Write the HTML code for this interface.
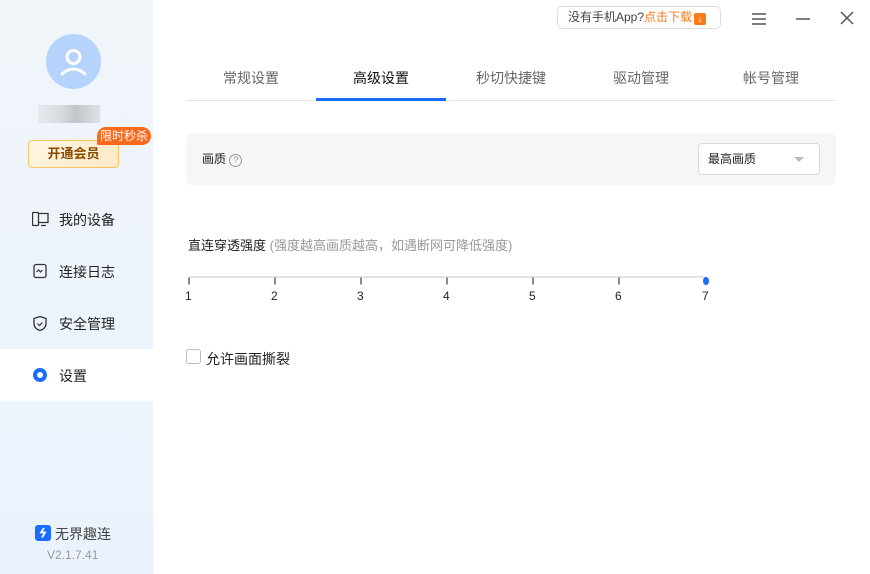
<!DOCTYPE html>
<html><head><meta charset="utf-8"><style>
*{margin:0;padding:0;box-sizing:border-box}
body{width:870px;height:574px;overflow:hidden;font-family:"Liberation Sans","Noto Sans CJK SC",sans-serif;background:#fff;position:relative;color:#222}
.side{position:absolute;left:0;top:0;width:153px;height:574px;background:linear-gradient(#f0f5f9,#eaf3fd)}
.abs{position:absolute}
.nav{position:absolute;left:0;width:153px;height:52px;font-size:14px;color:#222}
.nav span{position:absolute;left:59px;top:18px;line-height:18px}
.nav svg{position:absolute;left:32px;top:18px}
.tab{position:absolute;top:68px;width:130px;text-align:center;font-size:14px;color:#666;line-height:20px}
.n{position:absolute;top:289px;font-size:12px;color:#222}
</style></head><body>
<div class="side">
 <div class="abs" style="left:46px;top:34px;width:55px;height:55px;border-radius:50%;background:#b5d3fd">
  <svg width="55" height="55" viewBox="0 0 55 55"><circle cx="27.5" cy="23" r="6.5" fill="none" stroke="#fff" stroke-width="3"/><path d="M16 40 Q27.5 30 39 40" fill="none" stroke="#fff" stroke-width="3" stroke-linecap="round"/></svg>
 </div>
 <div class="abs" style="left:38px;top:105px;width:62px;height:18px;background:linear-gradient(90deg,#e4e8ec,#cfd3d8 40%,#b6b9bd 60%,#d9dde1);opacity:.8"></div>
 <div class="abs" style="left:28px;top:140px;width:91px;height:28px;border:1px solid #f6c461;border-radius:4px;background:linear-gradient(135deg,#fff6e4,#fde9c5);color:#8a4a00;font-size:13px;font-weight:bold;text-align:center;line-height:26px">开通会员</div>
 <div class="abs" style="left:97px;top:127px;width:54px;height:18px;background:#fa6a1d;border-radius:9px 9px 9px 2px;color:#fff;font-size:12px;text-align:center;line-height:18px">限时秒杀</div>
 <div class="nav" style="top:193px"><svg width="18" height="16" viewBox="0 0 18 16"><rect x="0.5" y="1.5" width="6" height="13" rx="1" fill="none" stroke="#333" stroke-width="1.3"/><path d="M6.5 2.5H16v9H6.5M9 14.5h5" fill="none" stroke="#333" stroke-width="1.3"/></svg><span>我的设备</span></div>
 <div class="nav" style="top:245px"><svg width="16" height="16" viewBox="0 0 16 16"><rect x="2" y="1.5" width="12" height="13" rx="2" fill="none" stroke="#333" stroke-width="1.3"/><path d="M4.5 9l2-2 2 2 2-2" fill="none" stroke="#333" stroke-width="1.2"/></svg><span>连接日志</span></div>
 <div class="nav" style="top:297px"><svg width="16" height="17" viewBox="0 0 16 17"><path d="M8 1.5L14 3.5v5c0 4-3 6-6 7-3-1-6-3-6-7v-5z" fill="none" stroke="#333" stroke-width="1.3"/><path d="M5.5 8.5l2 2 3-3" fill="none" stroke="#333" stroke-width="1.2"/></svg><span>安全管理</span></div>
 <div class="nav" style="top:349px;background:#fff"><svg width="16" height="16" viewBox="0 0 16 16"><circle cx="8" cy="8" r="5" fill="none" stroke="#1a6cff" stroke-width="4"/></svg><span>设置</span></div>
 <div class="abs" style="left:35px;top:525px;width:16px;height:16px;border-radius:3px;background:#1a6cff"><svg width="16" height="16" viewBox="0 0 16 16"><path d="M9 3L6 7.5h4L7 12.5" fill="none" stroke="#fff" stroke-width="1.8"/></svg></div>
 <div class="abs" style="left:55px;top:524px;font-size:14px;color:#444">无界趣连</div>
 <div class="abs" style="left:47px;top:548px;font-size:12px;color:#999">V2.1.7.41</div>
</div>
<div class="abs" style="left:557px;top:6px;width:164px;height:23px;border:1px solid #ddd;border-radius:5px;font-size:12px;line-height:21px;padding-left:10px;color:#444">没有手机App?<span style="color:#fa7b17">点击下载</span><span style="display:inline-block;width:12px;height:12px;background:#fa7b17;border-radius:2px;vertical-align:-1px;margin-left:2px;color:#fff;font-size:9px;line-height:12px;text-align:center">↓</span></div>
<svg class="abs" style="left:752px;top:12px" width="14" height="14"><path d="M0 2h14M0 7h14M0 12h14" stroke="#555" stroke-width="1.5"/></svg>
<svg class="abs" style="left:796px;top:12px" width="14" height="14"><path d="M0 7h14" stroke="#555" stroke-width="1.5"/></svg>
<svg class="abs" style="left:840px;top:11px" width="14" height="14"><path d="M1 1l12 12M13 1L1 13" stroke="#555" stroke-width="1.5"/></svg>
<div class="tab" style="left:186px">常规设置</div>
<div class="tab" style="left:316px;color:#111">高级设置</div>
<div class="tab" style="left:446px">秒切快捷键</div>
<div class="tab" style="left:576px">驱动管理</div>
<div class="tab" style="left:706px">帐号管理</div>
<div class="abs" style="left:186px;top:100px;width:650px;height:1px;background:#e6e6e6"></div>
<div class="abs" style="left:316px;top:98px;width:130px;height:3px;background:#1a6cff"></div>
<div class="abs" style="left:186px;top:133px;width:650px;height:52px;background:#f5f6f8;border-radius:6px"></div>
<div class="abs" style="left:202px;top:150px;font-size:12px;color:#222">画质 <span style="display:inline-block;width:13px;height:13px;border:1px solid #999;border-radius:50%;font-size:9px;color:#999;text-align:center;line-height:11px;vertical-align:0">?</span></div>
<div class="abs" style="left:698px;top:143px;width:122px;height:32px;border:1px solid #d6d8dc;border-radius:4px;background:#fff;font-size:12px;line-height:30px;padding-left:9px">最高画质<span style="position:absolute;right:15px;top:13px;border:5px solid transparent;border-top:5px solid #bbb;border-bottom:0"></span></div>
<div class="abs" style="left:188px;top:235px;font-size:13px;color:#222">直连穿透强度 <span style="color:#999">(强度越高画质越高，如遇断网可降低强度)</span></div>
<div class="abs" style="left:189px;top:276px;width:517px;height:2px;background:#e2e3e8"></div>
<div class="abs" style="left:188px;top:273px;width:525px;height:9px">
 <svg width="525" height="9"><g stroke="#888" stroke-width="2"><path d="M1 0.5v7M87 0.5v7M173 0.5v7M259 0.5v7M345 0.5v7M431 0.5v7"/></g><ellipse cx="518" cy="4" rx="3" ry="4" fill="#1a6cff"/></svg>
</div>
<div class="n" style="left:185px">1</div>
<div class="n" style="left:271px">2</div>
<div class="n" style="left:357px">3</div>
<div class="n" style="left:443px">4</div>
<div class="n" style="left:529px">5</div>
<div class="n" style="left:615px">6</div>
<div class="n" style="left:702px">7</div>
<div class="abs" style="left:186px;top:349px;width:15px;height:15px;border:1px solid #bbb;border-radius:3px"></div>
<div class="abs" style="left:206px;top:349px;font-size:14px;color:#222">允许画面撕裂</div>
</body></html>
